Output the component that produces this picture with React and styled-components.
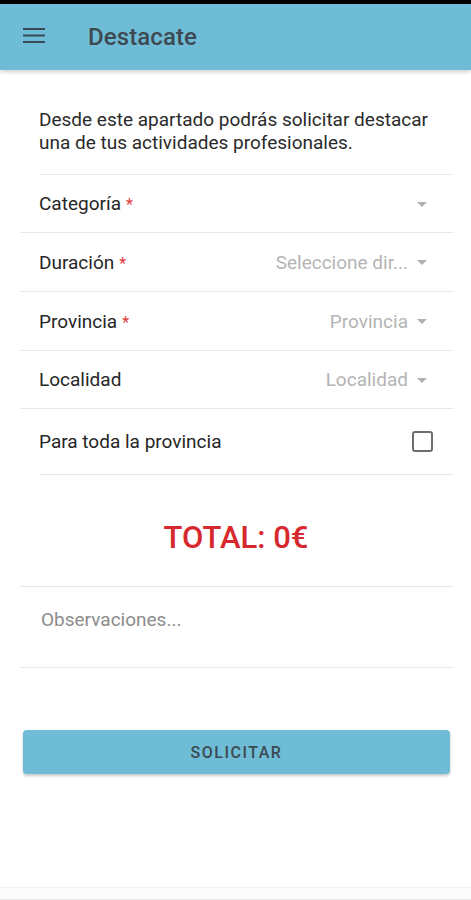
import React from "react";
import styled, { createGlobalStyle } from "styled-components";

const Global = createGlobalStyle`
  html, body { margin: 0; padding: 0; background: #ffffff; }
  body { font-family: Roboto, "Noto Sans", "Liberation Sans", sans-serif; -webkit-font-smoothing: antialiased; }
  * { box-sizing: border-box; }
`;

const Page = styled.div`
  display: flex;
  flex-direction: column;
  min-height: 100vh;
`;

const StatusBar = styled.div`
  height: 4px;
  background: #000;
`;

const AppBar = styled.header`
  height: 66px;
  background: #6fbcd7;
  display: flex;
  align-items: center;
  padding-left: 23px;
  gap: 43px;
  box-shadow: 0 2px 4px rgba(0, 0, 0, 0.18);
  position: relative;
  z-index: 1;
`;

const Title = styled.h1`
  margin: 0;
  font-size: 24px;
  font-weight: 500;
  color: #3d4a52;
  letter-spacing: 0.1px;
  line-height: 1;
  margin-top: -1px;
`;

const Content = styled.main`
  display: flex;
  flex-direction: column;
  padding: 38px 18px 0 0;
`;

const Intro = styled.p`
  margin: 0 0 20px 39px;
  font-size: 19px;
  line-height: 23px;
  color: #2a2a2a;
`;

const Row = styled.div`
  display: flex;
  align-items: center;
  height: ${(p) => p.$h || 58}px;
  margin-left: ${(p) => p.$inset}px;
  padding-left: ${(p) => 39 - p.$inset}px;
  padding-right: 26px;
  border-top: 1px solid #e7e7e7;
`;

const Label = styled.span`
  flex: 1;
  font-size: 19px;
  color: #262626;
`;

const Required = styled.span`
  color: #e0393e;
  font-size: 16px;
  margin-left: 5px;
`;

const Value = styled.span`
  font-size: 19px;
  color: #b4b4b4;
  margin-right: 9px;
`;

const Caret = styled.span`
  width: 0;
  height: 0;
  border-left: 5px solid transparent;
  border-right: 5px solid transparent;
  border-top: 5px solid #b0b0b0;
  margin-top: 1px;
`;

const Checkbox = styled.span`
  width: 21px;
  height: 21px;
  border: 2px solid #6e6e6e;
  border-radius: 3px;
  margin-right: -6px;
`;

const TotalBox = styled.div`
  height: 112px;
  margin-left: 39px;
  border-top: 1px solid #e7e7e7;
  display: flex;
  align-items: center;
  justify-content: center;
  padding-right: 20px;
  padding-top: 13px;
`;

const Total = styled.span`
  font-size: 31px;
  font-weight: 500;
  color: #d7282e;
`;

const Observations = styled.div`
  height: 82px;
  border-top: 1px solid #e7e7e7;
  border-bottom: 1px solid #e7e7e7;
  margin-left: 20px;
  padding-left: 21px;
  padding-top: 22px;
  font-size: 19px;
  line-height: 22px;
  color: #8c8c8c;
`;

const ButtonWrap = styled.div`
  padding: 62px 21px 0 23px;
`;

const Button = styled.button`
  width: 100%;
  height: 44px;
  border: none;
  border-radius: 4px;
  background: #6fbcd7;
  box-shadow: 0 2px 3px rgba(0, 0, 0, 0.22);
  font-family: Roboto, "Noto Sans", sans-serif;
  font-size: 16px;
  font-weight: 500;
  letter-spacing: 1.5px;
  color: #3b4a52;
`;

const Footer = styled.div`
  margin-top: auto;
  height: 13px;
  border-top: 1px solid #f2f2f2;
  border-bottom: 1px solid #e6e6e6;
  background: #fcfcfc;
`;

function Hamburger() {
  return (
    <svg width="22" height="16" viewBox="0 0 22 16" style={{ marginTop: -2 }}>
      <g fill="#3b4b55">
        <rect x="0" y="0" width="22" height="2" />
        <rect x="0" y="6.5" width="22" height="2" />
        <rect x="0" y="13" width="22" height="2" />
      </g>
    </svg>
  );
}

const selects = [
  { label: "Categoría", req: true, value: "", inset: 39 },
  { label: "Duración", req: true, value: "Seleccione dir...", inset: 20, h: 59 },
  { label: "Provincia", req: true, value: "Provincia", inset: 20, h: 59 },
  { label: "Localidad", req: false, value: "Localidad", inset: 20 },
];

export default function App() {
  return (
    <>
      <Global />
      <Page>
        <StatusBar />
        <AppBar>
          <Hamburger />
          <Title>Destacate</Title>
        </AppBar>
        <Content>
          <Intro>
            Desde este apartado podrás solicitar destacar una de tus actividades profesionales.
          </Intro>
          {selects.map((s) => (
            <Row key={s.label} $inset={s.inset} $h={s.h}>
              <Label>
                {s.label}
                {s.req && <Required>*</Required>}
              </Label>
              {s.value && <Value>{s.value}</Value>}
              <Caret />
            </Row>
          ))}
          <Row $inset={20} $h={66}>
            <Label>Para toda la provincia</Label>
            <Checkbox />
          </Row>
          <TotalBox>
            <Total>TOTAL: 0€</Total>
          </TotalBox>
          <Observations>Observaciones...</Observations>
        </Content>
        <ButtonWrap>
          <Button>SOLICITAR</Button>
        </ButtonWrap>
        <Footer />
      </Page>
    </>
  );
}
